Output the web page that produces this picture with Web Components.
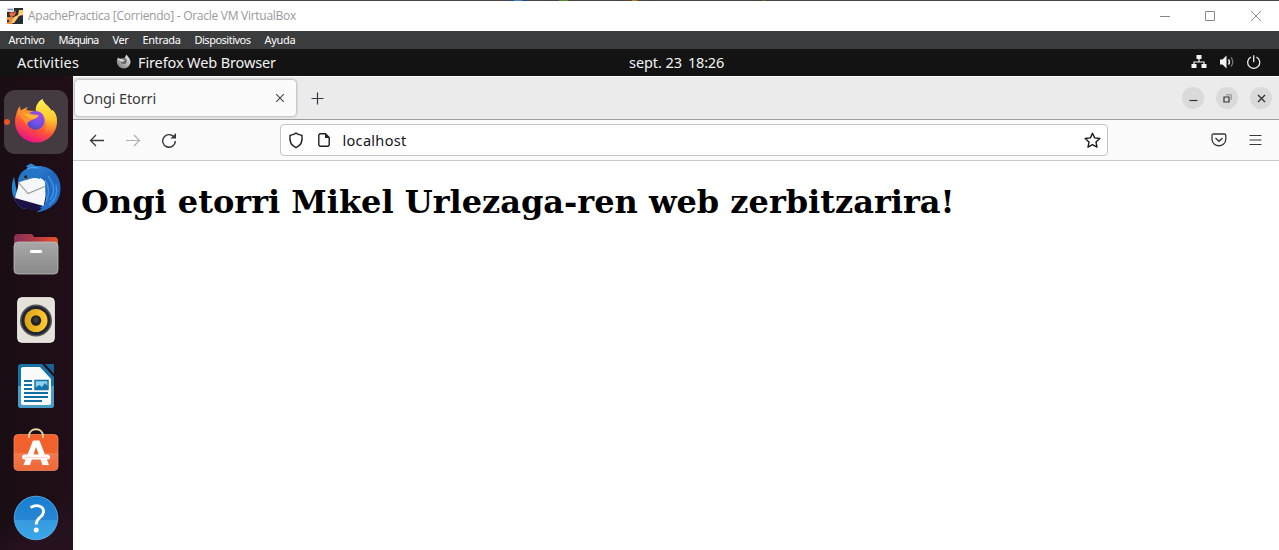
<!DOCTYPE html>
<html lang="es"><head><meta charset="utf-8"><title>ApachePractica</title>
<style>html,body{margin:0;height:100%;overflow:hidden;background:#fff}</style></head>
<body><vm-window></vm-window>
<script>
const define=(name,html,extra)=>customElements.define(name,class extends HTMLElement{
  constructor(){super();this.attachShadow({mode:'open'}).innerHTML=html}
  connectedCallback(){if(extra)extra.call(this,this.shadowRoot)}
});

/* Label spread over a set advance width through letter spacing */
define('fit-label',`<style>:host{display:block;white-space:pre;flex:none}span{display:inline-block}</style><span><slot></slot></span>`,function(r){
  const s=r.querySelector('span'),w=+this.getAttribute('w'),n=this.textContent.length;
  this.style.width=w+'px';
  s.style.letterSpacing=((w-s.getBoundingClientRect().width)/n)+'px';
});

const icons={
vbox:[16,16,`<path fill="#252d39" d="M0 0h16v16H0z"/><path fill="#d9d9dc" d="M0 0h7v4H0z"/><path d="M1 1.500h5" stroke="#889"/><path fill="#ef6a3a" d="M2 6l2-2 3 1 1-3 1 3-2 3-3 1z"/><path fill="#f08a3c" d="M0 9h5l3 1-1 3-2 3H0v-2h2v-2H0z"/><path fill="#ffc86e" d="M7 9l4-2 1-5h4v5l-4 1-2 3-3 4H4l2-4z"/>`],
min:[11,11,`<path d="M1 5.500h10" stroke="#888"/>`],
max:[11,11,`<path d="M.5.5h9v9h-9z" fill="none" stroke="#888"/>`],
close:[11,11,`<path d="M0 0l10 10m0-10l-10 10" stroke="#888"/>`],
net:[16,14,`<path d="M8 3v4M3 11V7h10v4" fill="none" stroke="#f4f4f4" stroke-width="1.2"/><path fill="#f4f4f4" d="M5.500 0h5v4h-5zM.5 9h5v4h-5zM10.500 9h5v4h-5z"/>`],
vol:[16,14,`<path fill="#f4f4f4" d="M1 4.500h2.500L7.500.5v13L3.500 9.500H1z"/><path d="M9.500 4.500q2 2.500 0 5" fill="none" stroke="#eee" stroke-width="1.400"/><path d="M12 2.500q3.600 4.500 0 9" fill="none" stroke="#777" stroke-width="1.300"/>`],
power:[14,14,`<path d="M4 2a6 6 0 1 0 5.400 0M6.700 .2v7" fill="none" stroke="#eee" stroke-width="1.300"/>`],
x:[10,10,`<path d="M1.200 1.200l7.600 7.600m0-7.600L1.200 8.800" stroke="#444" stroke-width="1.100"/>`],
plus:[13,13,`<path d="M6.500.5v12M.5 6.500h12" stroke="#3a3a3e" stroke-width="1.200"/>`],
back:[16,14,`<path d="M15 7.500H1.500M7 2L1.500 7.500 7 13" fill="none" stroke="#3a3a3d" stroke-width="1.300"/>`],
fwd:[16,14,`<path d="M1 7.500h13.500M9 2L14.500 7.500 9 13" fill="none" stroke="#b0b0b0" stroke-width="1.200"/>`],
reload:[16,16,`<path d="M13.600 6A6.300 6.300 0 1 0 14.300 9" fill="none" stroke="#37373b" stroke-width="1.400"/><path fill="#37373b" d="M15 1v5.500H9.500z"/>`],
shield:[16,17,`<path d="M8 1c2 1.700 4 1.700 6 2.500.700 5.500-1 10-6 12.200C3 13.500 1.300 9 2 3.500 4 2.700 6 2.700 8 1z" fill="none" stroke="#202024" stroke-width="1.400"/>`],
page:[12,14,`<path d="M2 .8h5.500l3.700 3.700V12l-1.200 1.200H2L.8 12V2z" fill="none" stroke="#202024" stroke-width="1.400"/><path d="M7 .5V5h4.500z" fill="#202024"/>`],
star:[17,17,`<path d="M8.500 1.200l2.150 4.700 5.150.65-3.800 3.500 1 5.100-4.500-2.500L4 15.150l1-5.100-3.800-3.500 5.150-.65z" fill="none" stroke="#1b1b1f" stroke-width="1.400" stroke-linejoin="round"/>`],
pocket:[16,14,`<path d="M2.500 1h10.800q1.500 0 1.500 1.500V6c0 9-13.800 9-13.800 0V2.500Q1 1 2.500 1z" fill="none" stroke="#38383b" stroke-width="1.300"/><path d="M4.500 5L8 8.300 11.500 5" fill="none" stroke="#38383b" stroke-width="1.400"/>`],
menu:[13,12,`<path d="M.5 1.500h12M.5 6h12M.5 10.500h12" stroke="#38383b" stroke-width="1.200"/>`],
wmin:[9,9,`<path d="M.5 6.500h8" stroke="#333" stroke-width="1.200"/>`],
wmax:[9,9,`<path d="M1 3h5v5H1z" fill="none" stroke="#333" stroke-width="1.200"/><path d="M3 .8h5.200V6" fill="none" stroke="#888"/>`],
wx:[9,9,`<path d="M1 1l7 7m0-7L1 8" stroke="#333" stroke-width="1.400"/>`],
foxgray:[16,16,`<defs><linearGradient id="g" x1="1" y1="0" x2="0" y2="1"><stop stop-color="#eee"/><stop offset="1" stop-color="#777"/></linearGradient></defs><path fill="url(#g)" d="M2 3.500l2 1.500q2-1.500 4.500-1l2-3.500c1 2 4 4 4 7.500a6.800 6.500 0 0 1-13.600 0C.9 6 1 5 2 3.500z"/><circle cx="7.700" cy="7" r="3" fill="#666"/><path d="M2 4.500l5 1 2 1-3 1.500q-2-1-4-3" fill="#ddd"/>`],
firefox:[48,48,`<defs><linearGradient id="a" x1=".8" y1=".1" x2=".4" y2="1"><stop stop-color="#fff44f"/><stop offset=".3" stop-color="#ffb02f"/><stop offset=".65" stop-color="#ff5536"/><stop offset="1" stop-color="#ec1385"/></linearGradient><radialGradient id="b" cx=".65" cy=".25" r=".8"><stop stop-color="#a847ea"/><stop offset=".55" stop-color="#7052e6"/><stop offset="1" stop-color="#5145bd"/></radialGradient><linearGradient id="c" x1=".5" y1="0" x2=".5" y2="1"><stop stop-color="#fff44f"/><stop offset=".55" stop-color="#ffc52e"/><stop offset="1" stop-color="#ff7a2a" stop-opacity="0"/></linearGradient></defs>
<path fill="url(#a)" d="M4 17C5 14 5 12 8 8q0 3 1 4.500Q12 10 16 9q-2 2-2 3.500L24 13C23 8 27 3 30.500 1c1 5 7 7 9 12l1-1c4 4 4.500 8 4.500 12a21 20.500 0 0 1-42 0q0-4 1-7z"/>
<path fill="url(#c)" d="M24 13C23 8 27 3 30.500 1c1 5 7 7 9 12l1-1c4 4 4.500 8 4 13-1 8-10 14-20 13 9-2 12-10 9-17-2-5-5-7-9.500-8z"/>
<path fill="url(#b)" d="M16 16c4-4 12-4 15 1 3 6 1 12-4 14-6 2.500-12-2-12-8z"/>
<path fill="#ff8e2b" d="M5 15l4-2.500 7-.5 3 4 7 1.500c-1 3-4 3.500-6 4.500-3 1.500-5 2-5 5-3-4-6-8-10-12z"/><path fill="#ffb537" d="M11 15l8 1.500 7.500.5c0 2.500-4 3.500-6 4-3-.500-6-2-9.500-6z"/>`],
bird:[50,50,`<defs><linearGradient id="a" x1=".2" y1="0" x2=".9" y2="1"><stop stop-color="#2f8fdb"/><stop offset=".45" stop-color="#2167be"/><stop offset="1" stop-color="#2372cc"/></linearGradient></defs>
<path fill="#2487d6" d="M3 14C-1 24 0 37 12 46l4-1-4-9-6-6z"/><path fill="#1d1046" d="M3 33l12 5 18 4-6 5-5 1-7-3-3 1C7 42 4 38 3 33z"/>
<path fill="url(#a)" d="M8 19c0-6 3-11 9-14L15 3l5-2.500L25 3c14-1 24 8 24.500 21C50 38 41 47 25 49.500l6-4-3-.500c5-2 7-6 7-11L28 17z"/>
<path fill="#f6f7f8" d="M8 15c6 1 12 1 17-1 4 .500 7 2 9 5l.500 15-2 9L4 35l3-11z"/><path fill="none" stroke="#999" stroke-width="1.100" d="M7 19l10 11.500L35 23"/>
<path fill="#2674c6" d="M7 20c0-7 3-12 9-14h12l1 10c-6-2-9-1-13 1-4 1-6 1-9 3z"/><path d="M12 15l5-2-2 4z" fill="#8e806e"/><circle cx="14.700" cy="14" r="1.700" fill="#1c2a3c"/>
<path d="M37 13c4 5 7 11 5 19l-3 5M34 17c4 6 5 13 1 22M45 22c2 8-1 15-7 20" fill="none" stroke="#3e97e4" stroke-width="1.400"/><path d="M16 6Q21 3 27 5" fill="none" stroke="#52aae9"/>`],
files:[46,44,`<defs><linearGradient id="a"><stop stop-color="#852e57"/><stop offset=".5" stop-color="#b43a43"/><stop offset="1" stop-color="#e75327"/></linearGradient><linearGradient id="b" x2="0" y2="1"><stop stop-color="#a8a8a8"/><stop offset="1" stop-color="#898989"/></linearGradient></defs><path fill="url(#a)" d="M1 6q0-4 4-4h13q2 0 3 3h20q4 0 4 4v8H1z"/><rect x="1" y="10" width="44" height="32" rx="4" fill="url(#b)" stroke="#c0bcbc" stroke-width=".8"/><rect x="17" y="18" width="12" height="3" rx="1" fill="#fff"/>`],
music:[38,46,`<defs><linearGradient id="a"><stop stop-color="#d9a317"/><stop offset="1" stop-color="#ffc932"/></linearGradient></defs><rect x=".7" y=".7" width="36.600" height="44.600" rx="4" fill="#e5e2d9" stroke="#f5f3ef"/><circle cx="19" cy="23.500" r="16" fill="#55565a"/><circle cx="19" cy="23.500" r="14.500" fill="#222431"/><circle cx="19" cy="23.500" r="11.500" fill="url(#a)"/><circle cx="19" cy="23.500" r="5.200" fill="#222326"/><circle cx="19" cy="23" r="2.500" fill="#3c3d3e"/>`],
writer:[38,46,`<path fill="#1672a9" d="M4 1h21l12 13v28q0 3-3 3H4q-3 0-3-3V4q0-3 3-3z"/><path fill="#4b9bc8" d="M1 23h36v19q0 3-3 3H4q-3 0-3-3z"/><path fill="#f9fafa" d="M6 4h17l11 12v24q0 2-2 2H6q-2 0-2-2V6q0-2 2-2z"/><path fill="#176294" d="M28 1h9v10z"/><path d="M7 18h8M7 22h8M7 26h8M7 30h24M7 34h24M7 38h18" stroke="#126fa5" stroke-width="2"/><path fill="#8dd1f3" stroke="#1474aa" stroke-width="1.500" d="M18 17.500h13v9H18z"/><path fill="#1474aa" d="M18 27v-2l4-3 3 2 3-4 3 4v3z"/>`],
store:[46,50,`<defs><linearGradient id="a" x2="0" y2="1"><stop stop-color="#f6602b"/><stop offset=".5" stop-color="#ef622e"/><stop offset=".51" stop-color="#f17b4e"/><stop offset="1" stop-color="#ee6737"/></linearGradient></defs><rect x="1" y="7.500" width="44" height="36" rx="4" fill="url(#a)" stroke="#ff9267" stroke-width=".7"/><path d="M16 11V9c0-9 14-9 14 0v2" fill="none" stroke="#ecd99e" stroke-width="1.800"/><path fill="#fff" fill-rule="evenodd" d="M20 13.500h6.500L36 38h-6.500L23 20l-6 18h-6.500z"/><rect x="9" y="27.500" width="28" height="5" rx="2.500" fill="#fff"/><path stroke="#f9d4c5" d="M11 30.500h24"/>`],
help:[46,46,`<defs><linearGradient id="a" x2="0" y2="1"><stop stop-color="#167fd2"/><stop offset=".54" stop-color="#2986d5"/><stop offset=".55" stop-color="#369adf"/><stop offset="1" stop-color="#3ba7ea"/></linearGradient></defs><circle cx="23" cy="23" r="21.800" fill="url(#a)" stroke="#5eb7ed" stroke-width=".8"/><path d="M17.500 12.500c7-4 13.500-1 13 4.500-.5 6-7.500 5-7.300 12.500" fill="none" stroke="#fff" stroke-width="2.800"/><circle cx="23.200" cy="35" r="2.500" fill="#fff"/>`]
};
define('ui-icon',`<style>:host{display:block;flex:none}svg{display:block}</style><div></div>`,function(r){
  const [w,h,p]=icons[this.getAttribute('name')];
  r.querySelector('div').innerHTML=`<svg width="${w}" height="${h}" viewBox="0 0 ${w} ${h}">${p}</svg>`;
});

define('title-bar',`<style>:host{display:flex;box-sizing:border-box;height:31px;background:linear-gradient(90deg,#454345 508px,#234a78 508px 514px,#3f86b8 514px 522px,#234a78 522px 527px,#454345 527px 559px,#4f8f22 559px 568px,#454345 568px 626px,#5c4438 626px 632px,#b07a30 632px 637px,#5c4438 637px 643px,#454345 643px 762px,#3f7d22 762px 765px,#454345 765px) 0 0/100% 1px no-repeat #fff;align-items:center;padding:1px 17px 0 7px;font:12px/16px "Open Sans",sans-serif;color:#999}
fit-label{margin-left:5px}.b{display:flex;gap:35px;margin-left:auto}</style><ui-icon name="vbox"></ui-icon><fit-label w="268">ApachePractica [Corriendo] - Oracle VM VirtualBox</fit-label><div class="b"><ui-icon name="min"></ui-icon><ui-icon name="max"></ui-icon><ui-icon name="close"></ui-icon></div>`);

define('menu-bar',`<style>:host{display:flex;height:18px;background:#3b3c3e;align-items:center;gap:14px;padding-left:8.500px;font:11px/16px "Noto Sans",sans-serif;color:#fff}</style><fit-label w="36">Archivo</fit-label><fit-label w="40">Máquina</fit-label><fit-label w="16">Ver</fit-label><fit-label w="38">Entrada</fit-label><fit-label w="56">Dispositivos</fit-label><fit-label w="31">Ayuda</fit-label>`);

define('gnome-bar',`<style>:host{display:grid;grid-template-columns:629px 1fr auto;box-sizing:border-box;height:27px;background:#131313;align-items:center;padding:0 18px 1px 0;font:14.500px/20px "Noto Sans",sans-serif;color:#f2f2f2}
div{display:flex;align-items:center}.l{padding-left:17px}.l ui-icon{margin:0 6px 0 37px}.c{gap:6px}.r{gap:12px}</style>
<div class="l"><fit-label w="62">Activities</fit-label><ui-icon name="foxgray"></ui-icon><fit-label w="138">Firefox Web Browser</fit-label></div><div class="c"><fit-label w="53">sept. 23</fit-label><fit-label w="36">18:26</fit-label></div><div class="r"><ui-icon name="net"></ui-icon><ui-icon name="vol"></ui-icon><ui-icon name="power"></ui-icon></div>`);

define('dock-item',`<style>:host{display:grid;place-items:center;width:64px;height:64px;border-radius:11px;position:relative}:host([active]){background:#443a41}:host([active])::before{content:"";position:absolute;left:0;top:29px;width:6px;height:6px;border-radius:50%;background:#e95420}</style><slot></slot>`);
define('app-dock',`<style>:host{display:flex;flex-direction:column;gap:2px;box-sizing:border-box;width:73px;padding:14px 0 0 4px;background:linear-gradient(150deg,transparent 88%,#26111f 94%),linear-gradient(90deg,#1a0d14,#200e18);overflow:hidden}</style>
<dock-item active><ui-icon name="firefox"></ui-icon></dock-item>${['bird','files','music','writer','store','help'].map(n=>`<dock-item><ui-icon name="${n}"></ui-icon></dock-item>`).join('')}`);

define('round-button',`<style>:host{display:grid;place-items:center;width:22px;height:22px;border-radius:50%;background:#dadada}</style><slot></slot>`);
define('tab-strip',`<style>:host{display:flex;box-sizing:border-box;height:44px;background:#ebebeb;border-top:1px solid #fff;border-bottom:1px solid #9d9d9d;align-items:center;padding:0 7px 0 2px;font:14.500px/20px "Noto Sans",sans-serif;color:#3b3b3d}
.tab{display:flex;align-items:center;box-sizing:border-box;width:221px;height:36px;background:#fbfbfb;border-radius:4px;box-shadow:0 0 3px #888;padding:0 11px 0 8px}.tab ui-icon{margin-left:auto}.plus{margin-left:15px}.w{display:flex;gap:12px;margin-left:auto}</style>
<div class="tab"><fit-label w="73">Ongi Etorri</fit-label><ui-icon name="x"></ui-icon></div><ui-icon class="plus" name="plus"></ui-icon><div class="w"><round-button><ui-icon name="wmin"></ui-icon></round-button><round-button><ui-icon name="wmax"></ui-icon></round-button><round-button><ui-icon name="wx"></ui-icon></round-button></div>`);

define('nav-bar',`<style>:host{display:flex;box-sizing:border-box;height:41px;background:#fbfbfb;border-bottom:1px solid #ccc;align-items:center;padding:0 17px 0 16px;font:14.500px/20px "Noto Sans",sans-serif;color:#15141a}
.n{display:flex;gap:20px;align-items:center;width:191px}.url{display:flex;align-items:center;box-sizing:border-box;width:828px;height:32px;border:1px solid #c4c4c4;border-radius:4px;background:#fff;padding:0 6px 0 7px}.url ui-icon:nth-child(2){margin:0 12.500px 0 14px}.url ui-icon:last-child{margin-left:auto}.e{display:flex;gap:22px;margin-left:auto;align-items:center}</style>
<div class="n"><ui-icon name="back"></ui-icon><ui-icon name="fwd"></ui-icon><ui-icon name="reload"></ui-icon></div><div class="url"><ui-icon name="shield"></ui-icon><ui-icon name="page"></ui-icon><fit-label w="64">localhost</fit-label><ui-icon name="star"></ui-icon></div><div class="e"><ui-icon name="pocket"></ui-icon><ui-icon name="menu"></ui-icon></div>`);

define('web-page',`<style>:host{display:block;flex:1;background:#fff;padding:22px 8px 0}h1{margin:0;font:bold 32px/38px "DejaVu Serif",serif;color:#000}</style><h1><slot></slot></h1>`);
define('browser-window',`<style>:host{display:flex;flex-direction:column;min-width:0}</style><tab-strip></tab-strip><nav-bar></nav-bar><web-page>Ongi etorri Mikel Urlezaga-ren web zerbitzarira!</web-page>`);
define('vm-window',`<style>:host{display:flex;flex-direction:column;height:550px;overflow:hidden}main{flex:1;min-height:0;display:grid;grid-template-columns:73px 1fr;grid-template-rows:100%}</style><title-bar></title-bar><menu-bar></menu-bar><gnome-bar></gnome-bar><main><app-dock></app-dock><browser-window></browser-window></main>`);
</script></body></html>
